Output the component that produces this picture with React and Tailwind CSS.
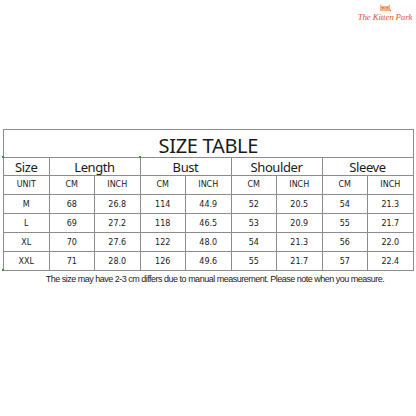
import React from "react";

const rows = [
  ["M", "68", "26.8", "114", "44.9", "52", "20.5", "54", "21.3"],
  ["L", "69", "27.2", "118", "46.5", "53", "20.9", "55", "21.7"],
  ["XL", "70", "27.6", "122", "48.0", "54", "21.3", "56", "22.0"],
  ["XXL", "71", "28.0", "126", "49.6", "55", "21.7", "57", "22.4"],
];

const cell = "border border-[#8c8c8c] p-0 text-center";

export default function App() {
  return (
    <div className="w-[416px] h-[416px] bg-white relative overflow-hidden" style={{ fontFamily: "'DejaVu Sans', sans-serif" }}>
      {/* logo */}
      <div className="flex justify-end pr-[5px] pt-[3px] h-[126px]">
        <div className="flex flex-col items-center w-[52px]">
          <svg width="12" height="9" viewBox="0 0 12 9">
            <path d="M1 1 L3 3 L9 3 L11 1 L11 8 L1 8 Z" fill="#f6b07c" />
            <rect x="3" y="4" width="1.5" height="1.5" fill="#e8703a" />
            <rect x="7.5" y="4" width="1.5" height="1.5" fill="#e8703a" />
            <circle cx="11.5" cy="7.5" r="0.8" fill="#e8703a" />
          </svg>
          <span className="text-[9px] leading-[11px] italic text-[#e8552b] whitespace-nowrap tracking-[-0.2px]" style={{ fontFamily: "'Liberation Serif', serif" }}>
            The Kitten Park
          </span>
        </div>
      </div>

      <div className="ml-[3px] mt-[3px] relative w-[410px]">
        <table className="w-[410px] table-fixed border-collapse text-[#1a1a1a]">
          <colgroup>
            {Array.from({ length: 9 }).map((_, i) => (
              <col key={i} className="w-[45.5px]" />
            ))}
          </colgroup>
          <tbody>
            <tr className="h-[28px]">
              <td colSpan={9} className={cell + " text-[20px] tracking-[-0.3px] pt-[4px] leading-[20px]"} style={{ fontFamily: "'Noto Sans', sans-serif" }}>
                SIZE TABLE
              </td>
            </tr>
            <tr className="h-[18px] text-[13px] tracking-[-0.4px] leading-[14px]" style={{ fontFamily: "'Noto Sans', sans-serif" }}>
              <td className={cell}>Size</td>
              <td colSpan={2} className={cell}>Length</td>
              <td colSpan={2} className={cell}>Bust</td>
              <td colSpan={2} className={cell}>Shoulder</td>
              <td colSpan={2} className={cell}>Sleeve</td>
            </tr>
            <tr className="h-[19px] text-[8px] leading-none">
              <td className={cell}>UNIT</td>
              {["CM", "INCH", "CM", "INCH", "CM", "INCH", "CM", "INCH"].map((t, i) => (
                <td key={i} className={cell}>{t}</td>
              ))}
            </tr>
            {rows.map((r, ri) => (
              <tr key={ri} className="h-[19px] text-[8px] leading-none">
                {r.map((v, i) => (
                  <td key={i} className={cell + " pt-[2px]"}>{v}</td>
                ))}
              </tr>
            ))}
          </tbody>
        </table>
        <span className="absolute left-[-1px] top-[27px] w-[2px] h-[2px] bg-[#2a9d2a]" />
        <span className="absolute left-[136px] top-[27px] w-[2px] h-[2px] bg-[#2a9d2a]" />
        <span className="absolute left-[-1px] top-[140px] w-[2px] h-[2px] bg-[#2a9d2a]" />
      </div>

      <p className="mt-[2px] text-center text-[9px] tracking-[-0.5px] text-[#222] pl-[14px]" style={{ fontFamily: "'Liberation Sans', sans-serif" }}>
        The size may have 2-3 cm differs due to manual measurement. Please note when you measure.
      </p>
    </div>
  );
}
